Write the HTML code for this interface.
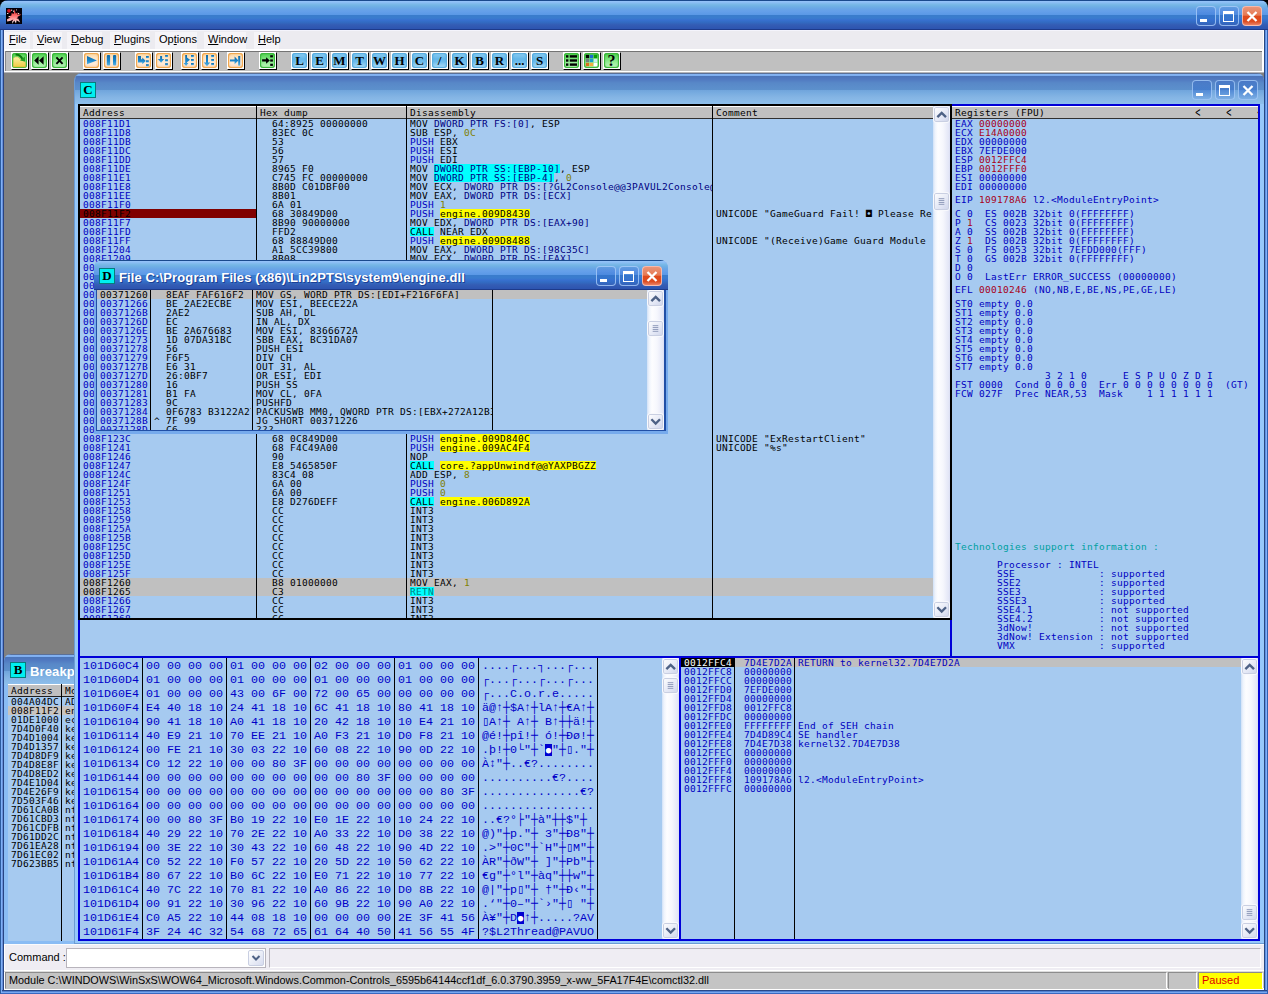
<!DOCTYPE html>
<html lang="en"><head><meta charset="utf-8"><title>OllyDbg</title>
<style>
html,body{margin:0;padding:0}
body{width:1268px;height:994px;position:relative;overflow:hidden;background:#808080;
 font-family:"Liberation Sans",sans-serif;font-size:11px;color:#000}
div,i,b,span.a{position:absolute;box-sizing:border-box}
i{display:block;font-style:normal}
.t{font:9.5px/9px "DejaVu Sans Mono","Liberation Mono",monospace;white-space:pre;height:13px;padding-top:0;letter-spacing:0.281px;color:#000}
.h{height:9px}
.d{font:11.67px/14px "Liberation Mono","DejaVu Sans Mono",monospace;white-space:pre;color:#0000c8;height:14px}
.clip{overflow:hidden}
.pane{background:#a6caf0;overflow:hidden}
.hdr{background:#c0c0c0;border-top:1px solid #fff}
.vl{width:1px;background:#000}
/* XP-ish caption buttons */
.cb{width:20px;height:20px;border:1px solid rgba(170,205,250,.8);border-radius:4px;background:linear-gradient(180deg,rgba(60,110,210,.25) 0,rgba(40,100,205,.30) 50%,rgba(70,130,215,.15) 100%)}
.cb.x{background:linear-gradient(180deg,#ea9478 0,#e67a54 46%,#e04a1c 50%,#dc4c22 80%,#ea8064 100%);border-color:rgba(250,200,190,.8)}
.cb.in{border-color:rgba(170,205,250,.75);background:linear-gradient(180deg,rgba(50,100,200,.30) 0,rgba(40,100,205,.42) 50%,rgba(70,130,215,.18) 100%)}
/* scrollbars */
.sb{width:17px;background:linear-gradient(90deg,#cfe0f7 0,#eef3fc 2px,#fdfdff 5px,#f6f7fd 10px,#e2e5f6 16px,#d9ddf3 17px)}
.sbb{left:0;width:17px;height:17px;border:1px solid #f8f9fd;border-radius:3px;
 background:linear-gradient(135deg,#ffffff 0%,#e3e7f5 60%,#cdd3ea 100%);box-shadow:inset 0 0 0 1px #c9cfe2}
.sbb svg{position:absolute;left:0;top:0}
/* toolbar buttons */
.tb{width:18px;height:18px;top:52px;background:#fcfcfc;border-left:1px solid #fff;border-top:1px solid #fff;border-right:1px solid #000;border-bottom:1px solid #000}
.tb>i{left:0;top:0;width:15px;height:15px;border-radius:3px}
.g>i{background:linear-gradient(180deg,#4fce4f 0%,#70e070 30%,#9aee9a 65%,#c4f8c4 100%);box-shadow:inset 0 0 0 1px #3cb83c,inset 0 0 2px 1px rgba(40,170,40,.55)}
.o>i{background:linear-gradient(180deg,#fbd9a4 0%,#fde6c8 35%,#fdebd8 70%,#fcdcc0 100%);box-shadow:inset 0 0 0 1px #f0a850,inset 0 0 2px 1px rgba(244,170,80,.7)}
.l>i{background:linear-gradient(180deg,#8fd0f4 0%,#62b6e8 40%,#6ebcec 60%,#b4e2fa 100%);box-shadow:inset 0 0 0 1px #58aee0,inset 0 0 2px 1px rgba(60,150,210,.45)}
.tb svg{position:absolute;left:0;top:0}
.tb span{position:absolute;left:0;top:0;width:15px;height:15px;text-align:center;font:bold 13px/15px "Liberation Serif",serif;color:#000}
.ttl{font:bold 13px/16px "Liberation Sans",sans-serif;color:#fff;white-space:pre;text-shadow:1px 1px 0 #1c3f94}
.ic{width:16px;height:16px;background:#00f0f0;border:1px solid #087c7c;text-align:center;font:bold 13px/14px "Liberation Serif",serif;color:#000}
.mn{font:11px/14px "Liberation Sans",sans-serif;white-space:pre;top:32px}
.mn u{text-decoration:underline}
</style></head>
<body>
<div style="left:0px;top:0px;width:1268px;height:12px;background:#000"></div>
<div style="left:0px;top:0px;width:1268px;height:30px;background:linear-gradient(180deg,#1a4a8c 0,#1a4a8c 1px,#96c4fa 1px,#88bcf2 3px,#7cbae8 4px,#70b2e4 6px,#68a4e6 9px,#66a0ea 11px,#5a98e6 15px,#3a7ccc 15px,#3a7cce 18px,#3870d0 20px,#326cc4 22px,#345cb4 25px,#2c54b0 29px,#1e3a8a 29px,#1e3a8a 30px);border-radius:8px 8px 0 0"></div>
<div style="left:6px;top:8px;width:16px;height:16px;background:#020008;overflow:hidden"><svg width="16" height="16" viewBox="0 0 16 16" style="position:absolute;left:0;top:0"><defs><linearGradient id="sp" x1="0" y1="0" x2="0" y2="1"><stop offset="0" stop-color="#d81818"/><stop offset="0.45" stop-color="#ff6e6e"/><stop offset="0.75" stop-color="#ffb8b8"/><stop offset="1" stop-color="#ffffff"/></linearGradient></defs><path d="M8.6 1 L9.6 5.6 L12 4.6 L11 6.6 L15.4 6.4 L11.4 9 L14.2 14.6 L10.6 12.2 L10 15.6 L8.2 12.6 L6.4 15.8 L6.2 12.4 L1.2 13.4 L1 11.2 L4.4 9.6 L2.6 8.6 L5.4 7.4 L5.6 5 L7.6 6 Z" fill="url(#sp)"/><circle cx="3" cy="2.8" r="1.9" fill="#d81420"/><rect x="5" y="1.6" width="1.2" height="1.2" fill="#e8c8c8"/><rect x="7" y="2.6" width="1.2" height="1.2" fill="#f0d8d8"/><rect x="10" y="1.4" width="1" height="1" fill="#e0b0b0"/><rect x="12" y="5" width="1.2" height="1.2" fill="#f0d0d0"/><rect x="1" y="5" width="1.4" height="1" fill="#f0d8d8"/><rect x="2.6" y="8" width="1.4" height="1.2" fill="#f4d0d0"/><path d="M4.6 12.6 L7.4 11.4 L6.6 13 Z" fill="#3a0010"/><path d="M10.4 10 L12.4 9.8 L11.6 11 Z" fill="#50101c"/></svg></div>
<div class="cb" style="left:1196px;top:6px"><svg width="18" height="18" viewBox="0 0 18 18" style="position:absolute;left:0;top:0"><rect x="3" y="12" width="7" height="3" fill="#fff"/></svg></div>
<div class="cb" style="left:1219px;top:6px"><svg width="18" height="18" viewBox="0 0 18 18" style="position:absolute;left:0;top:0"><rect x="3.5" y="4.5" width="10" height="10" fill="none" stroke="#fff" stroke-width="1"/><rect x="3" y="4" width="11" height="3" fill="#fff"/></svg></div>
<div class="cb x" style="left:1242px;top:6px"><svg width="18" height="18" viewBox="0 0 18 18" style="position:absolute;left:0;top:0"><path d="M4.5 5 L13.5 14 M13.5 5 L4.5 14" stroke="#fff" stroke-width="2.3" stroke-linecap="butt"/></svg></div>
<div style="left:0px;top:30px;width:4px;height:964px;background:linear-gradient(90deg,#2c5ca0 0,#2c5ca0 1px,#80b0f8 1px,#80b0f8 2px,#6890d8 2px,#6890d8 3px,#284484 3px)"></div>
<div style="left:1264px;top:30px;width:4px;height:964px;background:linear-gradient(90deg,#284880 0,#284880 1px,#6090e0 1px,#6090e0 2px,#80b0f8 2px,#80b0f8 3px,#3060b0 3px)"></div>
<div style="left:0px;top:990px;width:1268px;height:4px;background:linear-gradient(180deg,#284888 0,#284888 1px,#5080d0 1px,#5080d0 2px,#78a8f0 2px,#78a8f0 3px,#3868c0 3px)"></div>
<div style="left:0px;top:990px;width:1px;height:4px;background:#2c5ca0"></div>
<div style="left:1px;top:990px;width:1px;height:3px;background:#80b0f8"></div>
<div style="left:1267px;top:990px;width:1px;height:4px;background:#3060b0"></div>
<div style="left:4px;top:30px;width:1260px;height:21px;background:#ecebf0;border-left:1px solid #f6f6fa;border-right:1px solid #fff;border-bottom:2px solid #fff;border-top:1px solid #f4f4fc"></div>
<div style="left:5px;top:32px;width:25px;height:17px;background:#f5f4f8"></div>
<div class="mn" style="left:9px"><u>F</u>ile</div>
<div style="left:33px;top:32px;width:29px;height:17px;background:#f5f4f8"></div>
<div class="mn" style="left:37px"><u>V</u>iew</div>
<div style="left:67px;top:32px;width:35px;height:17px;background:#f5f4f8"></div>
<div class="mn" style="left:71px"><u>D</u>ebug</div>
<div style="left:110px;top:32px;width:40px;height:17px;background:#f5f4f8"></div>
<div class="mn" style="left:114px"><u>P</u>lugins</div>
<div style="left:155px;top:32px;width:42px;height:17px;background:#f5f4f8"></div>
<div class="mn" style="left:159px">Op<u>t</u>ions</div>
<div style="left:204px;top:32px;width:42px;height:17px;background:#f5f4f8"></div>
<div class="mn" style="left:208px"><u>W</u>indow</div>
<div style="left:254px;top:32px;width:25px;height:17px;background:#f5f4f8"></div>
<div class="mn" style="left:258px"><u>H</u>elp</div>
<div style="left:4px;top:51px;width:1260px;height:21px;background:#c0c0c0;border-left:1px solid #f0f0f4;border-bottom:1px solid #fff;border-right:2px solid #fff"></div>
<div style="left:5px;top:51px;width:1257px;height:1px;background:#747474"></div>
<div style="left:5px;top:51px;width:1px;height:20px;background:#8a8a8a"></div>
<div style="left:4px;top:72px;width:1260px;height:1px;background:#b4b4b8"></div>
<svg width="0" height="0" style="position:absolute"><defs><linearGradient id="ib" x1="0" y1="0" x2="0" y2="1" gradientUnits="objectBoundingBox"><stop offset="0" stop-color="#0f6aa6"/><stop offset="0.55" stop-color="#1a86cc"/><stop offset="1" stop-color="#58b4e4"/></linearGradient><linearGradient id="fy" x1="0" y1="0" x2="0" y2="1"><stop offset="0" stop-color="#faf2a8"/><stop offset="1" stop-color="#f0cc40"/></linearGradient></defs></svg>
<div class="tb g" style="left:11px"><i></i><svg width="15" height="15" viewBox="0 0 15 15"><path d="M1.3 5.2 L3 4 L6 4 L8 6 L13.4 9.2 L13.4 14 L1.3 14 Z" fill="url(#fy)" stroke="#c8b030" stroke-width="0.5"/><path d="M3.6 1.6 C6.5 1.6 9.2 3.6 10.8 6.4" fill="none" stroke="#0c780c" stroke-width="2"/><path d="M8 7.6 L13.2 8.6 L12.8 3.4 Z" fill="#22a022"/></svg></div>
<div class="tb g" style="left:31px"><i></i><svg width="15" height="15" viewBox="0 0 15 15"><path d="M6.6 3.2 L6.6 11.8 L2.2 7.5 Z M11.6 3.2 L11.6 11.8 L7 7.5 Z" fill="#000"/></svg></div>
<div class="tb g" style="left:51px"><i></i><svg width="15" height="15" viewBox="0 0 15 15"><path d="M4.4 4.4 L10.6 10.8 M10.6 4.4 L4.4 10.8" stroke="#000" stroke-width="1.9"/></svg></div>
<div class="tb o" style="left:83px"><i></i><svg width="15" height="15" viewBox="0 0 15 15"><path d="M3 3 L12.9 7.4 L3 11.3 Z" fill="url(#ib)"/></svg></div>
<div class="tb o" style="left:103px"><i></i><svg width="15" height="15" viewBox="0 0 15 15"><rect x="2.8" y="2" width="3.3" height="10.6" rx="1" fill="url(#ib)"/><rect x="9" y="2" width="3.2" height="10.6" rx="1" fill="url(#ib)"/></svg></div>
<div class="tb o" style="left:135px"><i></i><svg width="15" height="15" viewBox="0 0 15 15"><path d="M2 3 L5 3 L5 6.2 L6.3 6.2 L6.3 4.6 L9.8 8 L6.3 11.2 L6.3 9.4 L2 9.4 Z" fill="url(#ib)"/><rect x="10" y="3" width="2.8" height="2.1" fill="url(#ib)"/><rect x="10" y="7.3" width="2.8" height="2.1" fill="url(#ib)"/><rect x="10" y="11.2" width="2.8" height="2.1" fill="url(#ib)"/></svg></div>
<div class="tb o" style="left:155px"><i></i><svg width="15" height="15" viewBox="0 0 15 15"><path d="M4.1 3 L6.1 3 L6.1 5.9 L8.2 5.9 L5.1 9.7 L1.9 5.9 L4.1 5.9 Z" fill="url(#ib)"/><rect x="9.1" y="2" width="2.8" height="2.1" fill="url(#ib)"/><rect x="9.1" y="6.3" width="2.8" height="2.1" fill="url(#ib)"/><rect x="9.1" y="10.2" width="2.8" height="2.1" fill="url(#ib)"/></svg></div>
<div class="tb o" style="left:181px"><i></i><svg width="15" height="15" viewBox="0 0 15 15"><path d="M3.2 2 L5 2 L5 4.4 L8 6.8 L5 9.2 L5 10 L6.4 10 L4.1 13 L1.6 10 L3.2 10 Z" fill="url(#ib)"/><rect x="9" y="2" width="2.8" height="2.1" fill="url(#ib)"/><rect x="9" y="6" width="2.8" height="2.1" fill="url(#ib)"/><rect x="9" y="10" width="2.8" height="2.1" fill="url(#ib)"/></svg></div>
<div class="tb o" style="left:201px"><i></i><svg width="15" height="15" viewBox="0 0 15 15"><path d="M4 2 L6 2 L6 9.5 L8.2 9.5 L5 13.2 L1.8 9.5 L4 9.5 Z" fill="url(#ib)"/><rect x="9.2" y="2" width="2.8" height="2.1" fill="url(#ib)"/><rect x="9.2" y="6" width="2.8" height="2.1" fill="url(#ib)"/><rect x="9.2" y="10" width="2.8" height="2.1" fill="url(#ib)"/></svg></div>
<div class="tb o" style="left:227px"><i></i><svg width="15" height="15" viewBox="0 0 15 15"><path d="M2 6.4 L6.6 6.4 L6.6 3.6 L10.4 7.4 L6.6 11.2 L6.6 8.5 L2 8.5 Z" fill="url(#ib)"/><rect x="10.2" y="3" width="2" height="9.6" fill="url(#ib)"/></svg></div>
<div class="tb g" style="left:259px"><i></i><svg width="15" height="15" viewBox="0 0 15 15"><path d="M2.1 6.3 L6.1 6.3 L6.1 4.3 L9.8 7.5 L6.1 10.7 L6.1 8.6 L2.1 8.6 Z" fill="#000"/><rect x="10.2" y="2.2" width="2.7" height="2.2" fill="#000"/><rect x="10.2" y="6.4" width="2.7" height="2.2" fill="#000"/><rect x="10.2" y="10.7" width="2.7" height="2.2" fill="#000"/></svg></div>
<div class="tb l" style="left:291px"><i></i><span>L</span></div>
<div class="tb l" style="left:311px"><i></i><span>E</span></div>
<div class="tb l" style="left:331px"><i></i><span>M</span></div>
<div class="tb l" style="left:351px"><i></i><span>T</span></div>
<div class="tb l" style="left:371px"><i></i><span>W</span></div>
<div class="tb l" style="left:391px"><i></i><span>H</span></div>
<div class="tb l" style="left:411px"><i></i><span>C</span></div>
<div class="tb l" style="left:431px"><i></i><span>/</span></div>
<div class="tb l" style="left:451px"><i></i><span>K</span></div>
<div class="tb l" style="left:471px"><i></i><span>B</span></div>
<div class="tb l" style="left:491px"><i></i><span>R</span></div>
<div class="tb l" style="left:511px"><i></i><span>...</span></div>
<div class="tb l" style="left:531px"><i></i><span>S</span></div>
<div class="tb g" style="left:563px"><i></i><svg width="15" height="15" viewBox="0 0 15 15"><rect x="2" y="2.2" width="2.4" height="2.4" fill="#000"/><rect x="5.8" y="2.2" width="7.2" height="2.4" fill="#000"/><rect x="2" y="6.3" width="2.4" height="2.4" fill="#000"/><rect x="5.8" y="6.3" width="7.2" height="2.4" fill="#000"/><rect x="2" y="10.4" width="2.4" height="2.4" fill="#000"/><rect x="5.8" y="10.4" width="7.2" height="2.4" fill="#000"/></svg></div>
<div class="tb g" style="left:583px"><i></i><svg width="15" height="15" viewBox="0 0 15 15"><rect x="1.8" y="1.8" width="3.4" height="3.4" fill="#000"/><rect x="5.8" y="1.8" width="3.4" height="3.4" fill="#1a6ad0"/><rect x="9.8" y="1.8" width="3.4" height="3.4" fill="#0a9a0a"/><rect x="1.8" y="5.8" width="3.4" height="3.4" fill="#70807a"/><rect x="5.8" y="5.8" width="3.4" height="3.4" fill="#18a0c8"/><rect x="9.8" y="5.8" width="3.4" height="3.4" fill="#c8f0f0"/><rect x="1.8" y="9.8" width="3.4" height="3.4" fill="#d87018"/><rect x="5.8" y="9.8" width="3.4" height="3.4" fill="#f0b040"/><rect x="9.8" y="9.8" width="3.4" height="3.4" fill="#ffffff"/></svg></div>
<div class="tb g" style="left:603px"><i></i><span style="font-size:16px">?</span></div>
<div style="left:74px;top:73px;width:1190px;height:871px;background:#6c9cd4;border-radius:8px 8px 0 0"></div>
<div style="left:75px;top:74px;width:1189px;height:869px;background:#96c8fa;border-radius:7px 7px 0 0"></div>
<div style="left:75px;top:73px;width:1189px;height:31px;background:linear-gradient(180deg,#5a7098 0,#5a7098 1px,#86b4f2 1px,#7eaef0 2.5px,#4a74b8 3px,#5078c0 6px,#5888c8 10px,#5c90cc 16.5px,#70a4dc 17px,#78ace0 20px,#84b4e4 24px,#8ec0ec 31px);border-radius:7px 7px 0 0"></div>
<div class="ic" style="left:80px;top:82px">C</div>
<div class="cb in" style="left:1192px;top:80px"><svg width="18" height="18" viewBox="0 0 18 18" style="position:absolute;left:0;top:0"><rect x="3" y="12" width="7" height="3" fill="#fff"/></svg></div>
<div class="cb in" style="left:1215px;top:80px"><svg width="18" height="18" viewBox="0 0 18 18" style="position:absolute;left:0;top:0"><rect x="3.5" y="4.5" width="10" height="10" fill="none" stroke="#fff" stroke-width="1"/><rect x="3" y="4" width="11" height="3" fill="#fff"/></svg></div>
<div class="cb in" style="left:1238px;top:80px"><svg width="18" height="18" viewBox="0 0 18 18" style="position:absolute;left:0;top:0"><path d="M4.5 5 L13.5 14 M13.5 5 L4.5 14" stroke="#fff" stroke-width="2.3" stroke-linecap="butt"/></svg></div>
<div style="left:78px;top:104px;width:1182px;height:837px;background:#a6caf0"></div>
<div style="left:78px;top:104px;width:874px;height:2px;background:#000"></div>
<div style="left:78px;top:104px;width:2px;height:516px;background:#000"></div>
<div style="left:78px;top:618px;width:874px;height:2px;background:#000"></div>
<div style="left:950px;top:104px;width:2px;height:516px;background:#000"></div>
<div style="left:952px;top:104px;width:308px;height:2px;background:#0000d8"></div>
<div style="left:1258px;top:104px;width:2px;height:837px;background:#0000d8"></div>
<div style="left:78px;top:620px;width:2px;height:321px;background:#0000d8"></div>
<div style="left:950px;top:620px;width:2px;height:38px;background:#0000d8"></div>
<div style="left:78px;top:656px;width:1182px;height:2px;background:#0000d8"></div>
<div style="left:679px;top:658px;width:2px;height:283px;background:#0000d8"></div>
<div style="left:78px;top:939px;width:1182px;height:2px;background:#0000d8"></div>
<div class="pane" style="left:80px;top:106px;width:870px;height:512px">
<div class="hdr" style="left:0px;top:0px;width:853px;height:12px;"></div>
<div style="left:0px;top:12px;width:853px;height:1px;background:#303030"></div>
<div class="t" style="left:3px;top:2px;">Address</div>
<div class="t" style="left:180px;top:2px;">Hex dump</div>
<div class="t" style="left:330px;top:2px;">Disassembly</div>
<div class="t" style="left:636px;top:2px;">Comment</div>





<i class="h" style="left:354px;top:58px;width:126px;background:#00ffff"></i>
<i class="h" style="left:354px;top:67px;width:120px;background:#00ffff"></i>



<div style="left:0px;top:103px;width:176px;height:9px;background:#800000"></div>
<i class="h" style="left:360px;top:103px;width:90px;background:#ffff00"></i>

<i class="h" style="left:330px;top:121px;width:24px;background:#00ffff"></i>
<i class="h" style="left:360px;top:130px;width:90px;background:#ffff00"></i>


<i class="h" style="left:360px;top:328px;width:90px;background:#ffff00"></i>
<i class="h" style="left:360px;top:337px;width:90px;background:#ffff00"></i>

<i class="h" style="left:330px;top:355px;width:24px;background:#00ffff"></i><i class="h" style="left:360px;top:355px;width:156px;background:#ffff00"></i>



<i class="h" style="left:330px;top:391px;width:24px;background:#00ffff"></i><i class="h" style="left:360px;top:391px;width:90px;background:#ffff00"></i>








<div style="left:0px;top:472px;width:853px;height:9px;background:#c0c0c0"></div>

<div style="left:0px;top:481px;width:853px;height:9px;background:#c0c0c0"></div>
<i class="h" style="left:330px;top:481px;width:24px;background:#00ffff"></i>



<div class="t" style="left:3px;top:13px;color:#0000c0;">008F11D1</div>
<div class="t" style="left:192px;top:13px;">64:8925 00000000</div>
<div class="t" style="left:330px;top:13px;width:302px;overflow:hidden">MOV <span style="color:#000080">DWORD PTR FS:[</span><span style="color:#000080">0</span><span style="color:#000080">]</span>, ESP</div>
<div class="t" style="left:3px;top:22px;color:#0000c0;">008F11D8</div>
<div class="t" style="left:192px;top:22px;">83EC 0C</div>
<div class="t" style="left:330px;top:22px;width:302px;overflow:hidden">SUB ESP, <span style="color:#808000">0C</span></div>
<div class="t" style="left:3px;top:31px;color:#0000c0;">008F11DB</div>
<div class="t" style="left:192px;top:31px;">53</div>
<div class="t" style="left:330px;top:31px;width:302px;overflow:hidden"><span style="color:#0000c0">PUSH</span> EBX</div>
<div class="t" style="left:3px;top:40px;color:#0000c0;">008F11DC</div>
<div class="t" style="left:192px;top:40px;">56</div>
<div class="t" style="left:330px;top:40px;width:302px;overflow:hidden"><span style="color:#0000c0">PUSH</span> ESI</div>
<div class="t" style="left:3px;top:49px;color:#0000c0;">008F11DD</div>
<div class="t" style="left:192px;top:49px;">57</div>
<div class="t" style="left:330px;top:49px;width:302px;overflow:hidden"><span style="color:#0000c0">PUSH</span> EDI</div>
<div class="t" style="left:3px;top:58px;color:#0000c0;">008F11DE</div>
<div class="t" style="left:192px;top:58px;">8965 F0</div>
<div class="t" style="left:330px;top:58px;width:302px;overflow:hidden">MOV <span style="color:#000080">DWORD PTR SS:[EBP-10]</span>, ESP</div>
<div class="t" style="left:3px;top:67px;color:#0000c0;">008F11E1</div>
<div class="t" style="left:192px;top:67px;">C745 FC 00000000</div>
<div class="t" style="left:330px;top:67px;width:302px;overflow:hidden">MOV <span style="color:#000080">DWORD PTR SS:[EBP-4]</span>, <span style="color:#808000">0</span></div>
<div class="t" style="left:3px;top:76px;color:#0000c0;">008F11E8</div>
<div class="t" style="left:192px;top:76px;">8B0D C01DBF00</div>
<div class="t" style="left:330px;top:76px;width:302px;overflow:hidden">MOV ECX, <span style="color:#000080">DWORD PTR DS:[?GL2Console@@3PAVUL2Console@@A]</span></div>
<div class="t" style="left:3px;top:85px;color:#0000c0;">008F11EE</div>
<div class="t" style="left:192px;top:85px;">8B01</div>
<div class="t" style="left:330px;top:85px;width:302px;overflow:hidden">MOV EAX, <span style="color:#000080">DWORD PTR DS:[ECX]</span></div>
<div class="t" style="left:3px;top:94px;color:#0000c0;">008F11F0</div>
<div class="t" style="left:192px;top:94px;">6A 01</div>
<div class="t" style="left:330px;top:94px;width:302px;overflow:hidden"><span style="color:#0000c0">PUSH</span> <span style="color:#808000">1</span></div>
<div class="t" style="left:3px;top:103px;color:#000;">008F11F2</div>
<div class="t" style="left:192px;top:103px;">68 30849D00</div>
<div class="t" style="left:330px;top:103px;width:302px;overflow:hidden"><span style="color:#0000c0">PUSH</span> engine.009D8430</div>
<div class="t" style="left:636px;top:103px;width:216px;overflow:hidden">UNICODE "GameGuard Fail! ◘ Please Re</div>
<div class="t" style="left:3px;top:112px;color:#0000c0;">008F11F7</div>
<div class="t" style="left:192px;top:112px;">8B90 90000000</div>
<div class="t" style="left:330px;top:112px;width:302px;overflow:hidden">MOV EDX, <span style="color:#000080">DWORD PTR DS:[EAX+90]</span></div>
<div class="t" style="left:3px;top:121px;color:#0000c0;">008F11FD</div>
<div class="t" style="left:192px;top:121px;">FFD2</div>
<div class="t" style="left:330px;top:121px;width:302px;overflow:hidden">CALL NEAR EDX</div>
<div class="t" style="left:3px;top:130px;color:#0000c0;">008F11FF</div>
<div class="t" style="left:192px;top:130px;">68 88849D00</div>
<div class="t" style="left:330px;top:130px;width:302px;overflow:hidden"><span style="color:#0000c0">PUSH</span> engine.009D8488</div>
<div class="t" style="left:636px;top:130px;width:216px;overflow:hidden">UNICODE "(Receive)Game Guard Module</div>
<div class="t" style="left:3px;top:139px;color:#0000c0;">008F1204</div>
<div class="t" style="left:192px;top:139px;">A1 5CC39800</div>
<div class="t" style="left:330px;top:139px;width:302px;overflow:hidden">MOV EAX, <span style="color:#000080">DWORD PTR DS:[98C35C]</span></div>
<div class="t" style="left:3px;top:148px;color:#0000c0;">008F1209</div>
<div class="t" style="left:192px;top:148px;">8B08</div>
<div class="t" style="left:330px;top:148px;width:302px;overflow:hidden">MOV ECX, <span style="color:#000080">DWORD PTR DS:[EAX]</span></div>
<div class="t" style="left:3px;top:157px;color:#0000c0;">008F120B</div>
<div class="t" style="left:3px;top:166px;color:#0000c0;">008F120D</div>
<div class="t" style="left:3px;top:175px;color:#0000c0;">008F120F</div>
<div class="t" style="left:3px;top:184px;color:#0000c0;">008F1215</div>
<div class="t" style="left:3px;top:193px;color:#0000c0;">008F1217</div>
<div class="t" style="left:3px;top:202px;color:#0000c0;">008F1219</div>
<div class="t" style="left:3px;top:211px;color:#0000c0;">008F121B</div>
<div class="t" style="left:3px;top:220px;color:#0000c0;">008F121D</div>
<div class="t" style="left:3px;top:229px;color:#0000c0;">008F121F</div>
<div class="t" style="left:3px;top:238px;color:#0000c0;">008F1221</div>
<div class="t" style="left:3px;top:247px;color:#0000c0;">008F1226</div>
<div class="t" style="left:3px;top:256px;color:#0000c0;">008F1228</div>
<div class="t" style="left:3px;top:265px;color:#0000c0;">008F122A</div>
<div class="t" style="left:3px;top:274px;color:#0000c0;">008F122F</div>
<div class="t" style="left:3px;top:283px;color:#0000c0;">008F1231</div>
<div class="t" style="left:3px;top:292px;color:#0000c0;">008F1233</div>
<div class="t" style="left:3px;top:301px;color:#0000c0;">008F1235</div>
<div class="t" style="left:3px;top:310px;color:#0000c0;">008F1237</div>
<div class="t" style="left:3px;top:319px;color:#0000c0;">008F123A</div>
<div class="t" style="left:3px;top:328px;color:#0000c0;">008F123C</div>
<div class="t" style="left:192px;top:328px;">68 0C849D00</div>
<div class="t" style="left:330px;top:328px;width:302px;overflow:hidden"><span style="color:#0000c0">PUSH</span> engine.009D840C</div>
<div class="t" style="left:636px;top:328px;width:216px;overflow:hidden">UNICODE "ExRestartClient"</div>
<div class="t" style="left:3px;top:337px;color:#0000c0;">008F1241</div>
<div class="t" style="left:192px;top:337px;">68 F4C49A00</div>
<div class="t" style="left:330px;top:337px;width:302px;overflow:hidden"><span style="color:#0000c0">PUSH</span> engine.009AC4F4</div>
<div class="t" style="left:636px;top:337px;width:216px;overflow:hidden">UNICODE "%s"</div>
<div class="t" style="left:3px;top:346px;color:#0000c0;">008F1246</div>
<div class="t" style="left:192px;top:346px;">90</div>
<div class="t" style="left:330px;top:346px;width:302px;overflow:hidden">NOP</div>
<div class="t" style="left:3px;top:355px;color:#0000c0;">008F1247</div>
<div class="t" style="left:192px;top:355px;">E8 5465850F</div>
<div class="t" style="left:330px;top:355px;width:302px;overflow:hidden">CALL core.?appUnwindf@@YAXPBGZZ</div>
<div class="t" style="left:3px;top:364px;color:#0000c0;">008F124C</div>
<div class="t" style="left:192px;top:364px;">83C4 08</div>
<div class="t" style="left:330px;top:364px;width:302px;overflow:hidden">ADD ESP, <span style="color:#808000">8</span></div>
<div class="t" style="left:3px;top:373px;color:#0000c0;">008F124F</div>
<div class="t" style="left:192px;top:373px;">6A 00</div>
<div class="t" style="left:330px;top:373px;width:302px;overflow:hidden"><span style="color:#0000c0">PUSH</span> <span style="color:#808000">0</span></div>
<div class="t" style="left:3px;top:382px;color:#0000c0;">008F1251</div>
<div class="t" style="left:192px;top:382px;">6A 00</div>
<div class="t" style="left:330px;top:382px;width:302px;overflow:hidden"><span style="color:#0000c0">PUSH</span> <span style="color:#808000">0</span></div>
<div class="t" style="left:3px;top:391px;color:#0000c0;">008F1253</div>
<div class="t" style="left:192px;top:391px;">E8 D276DEFF</div>
<div class="t" style="left:330px;top:391px;width:302px;overflow:hidden">CALL engine.006D892A</div>
<div class="t" style="left:3px;top:400px;color:#0000c0;">008F1258</div>
<div class="t" style="left:192px;top:400px;">CC</div>
<div class="t" style="left:330px;top:400px;width:302px;overflow:hidden">INT3</div>
<div class="t" style="left:3px;top:409px;color:#0000c0;">008F1259</div>
<div class="t" style="left:192px;top:409px;">CC</div>
<div class="t" style="left:330px;top:409px;width:302px;overflow:hidden">INT3</div>
<div class="t" style="left:3px;top:418px;color:#0000c0;">008F125A</div>
<div class="t" style="left:192px;top:418px;">CC</div>
<div class="t" style="left:330px;top:418px;width:302px;overflow:hidden">INT3</div>
<div class="t" style="left:3px;top:427px;color:#0000c0;">008F125B</div>
<div class="t" style="left:192px;top:427px;">CC</div>
<div class="t" style="left:330px;top:427px;width:302px;overflow:hidden">INT3</div>
<div class="t" style="left:3px;top:436px;color:#0000c0;">008F125C</div>
<div class="t" style="left:192px;top:436px;">CC</div>
<div class="t" style="left:330px;top:436px;width:302px;overflow:hidden">INT3</div>
<div class="t" style="left:3px;top:445px;color:#0000c0;">008F125D</div>
<div class="t" style="left:192px;top:445px;">CC</div>
<div class="t" style="left:330px;top:445px;width:302px;overflow:hidden">INT3</div>
<div class="t" style="left:3px;top:454px;color:#0000c0;">008F125E</div>
<div class="t" style="left:192px;top:454px;">CC</div>
<div class="t" style="left:330px;top:454px;width:302px;overflow:hidden">INT3</div>
<div class="t" style="left:3px;top:463px;color:#0000c0;">008F125F</div>
<div class="t" style="left:192px;top:463px;">CC</div>
<div class="t" style="left:330px;top:463px;width:302px;overflow:hidden">INT3</div>
<div class="t" style="left:3px;top:472px;color:#000;">008F1260</div>
<div class="t" style="left:192px;top:472px;">B8 01000000</div>
<div class="t" style="left:330px;top:472px;width:302px;overflow:hidden">MOV EAX, <span style="color:#808000">1</span></div>
<div class="t" style="left:3px;top:481px;color:#000;">008F1265</div>
<div class="t" style="left:192px;top:481px;">C3</div>
<div class="t" style="left:330px;top:481px;width:302px;overflow:hidden"><span style="color:#008080">RETN</span></div>
<div class="t" style="left:3px;top:490px;color:#0000c0;">008F1266</div>
<div class="t" style="left:192px;top:490px;">CC</div>
<div class="t" style="left:330px;top:490px;width:302px;overflow:hidden">INT3</div>
<div class="t" style="left:3px;top:499px;color:#0000c0;">008F1267</div>
<div class="t" style="left:192px;top:499px;">CC</div>
<div class="t" style="left:330px;top:499px;width:302px;overflow:hidden">INT3</div>
<div class="t" style="left:3px;top:508px;color:#0000c0;">008F1268</div>
<div class="t" style="left:192px;top:508px;">CC</div>
<div class="t" style="left:330px;top:508px;width:302px;overflow:hidden">INT3</div>
<div class="vl" style="left:176px;top:0px;width:1px;height:512px;"></div>
<div class="vl" style="left:326px;top:0px;width:1px;height:512px;"></div>
<div class="vl" style="left:632px;top:0px;width:1px;height:512px;"></div>
</div>
<div class="sb" style="left:933px;top:106px;height:512px"><div class="sbb" style="top:0"><svg width="15" height="15" viewBox="0 0 16 16"><path d="M3.6 10.8 L8.2 6.2 L12.8 10.8" fill="none" stroke="#4d6185" stroke-width="2.5"/></svg></div><div class="sbb" style="top:86px;height:19px"><svg style="top:1px" width="15" height="15" viewBox="0 0 16 16"><rect x="5" y="4.5" width="6" height="1" fill="#8d98b8"/><rect x="5" y="6.5" width="6" height="1" fill="#8d98b8"/><rect x="5" y="8.5" width="6" height="1" fill="#8d98b8"/><rect x="5" y="10.5" width="6" height="1" fill="#8d98b8"/></svg></div><div class="sbb" style="top:495px"><svg width="15" height="15" viewBox="0 0 16 16"><path d="M3.6 5.6 L8.2 10.2 L12.8 5.6" fill="none" stroke="#4d6185" stroke-width="2.5"/></svg></div></div>
<div class="pane" style="left:952px;top:106px;width:306px;height:550px">
<div class="hdr" style="left:0px;top:0px;width:306px;height:12px;"></div>
<div style="left:0px;top:12px;width:306px;height:1px;background:#303030"></div>
<div class="t" style="left:3px;top:2px;">Registers (FPU)</div>
<div class="t" style="left:243px;top:2px;"><span style="display:inline-block;transform:scale(0.9,1.5);transform-origin:50% 62%">&lt;</span></div>
<div class="t" style="left:274px;top:2px;"><span style="display:inline-block;transform:scale(0.9,1.5);transform-origin:50% 62%">&lt;</span></div>
<div class="t" style="left:305px;top:2px;"><span style="display:inline-block;transform:scale(0.9,1.5);transform-origin:50% 62%">&lt;</span></div>
<div class="t" style="left:3px;top:13px;color:#0000c0;">EAX <span style="color:#a80018">00000000</span></div>
<div class="t" style="left:3px;top:22px;color:#0000c0;">ECX <span style="color:#a80018">E14A0000</span></div>
<div class="t" style="left:3px;top:31px;color:#0000c0;">EDX 00000000</div>
<div class="t" style="left:3px;top:40px;color:#0000c0;">EBX 7EFDE000</div>
<div class="t" style="left:3px;top:49px;color:#0000c0;">ESP <span style="color:#a80018">0012FFC4</span></div>
<div class="t" style="left:3px;top:58px;color:#0000c0;">EBP <span style="color:#a80018">0012FFF0</span></div>
<div class="t" style="left:3px;top:67px;color:#0000c0;">ESI 00000000</div>
<div class="t" style="left:3px;top:76px;color:#0000c0;">EDI 00000000</div>
<div class="t" style="left:3px;top:89px;color:#0000c0;">EIP <span style="color:#a80018">109178A6</span> l2.&lt;ModuleEntryPoint&gt;</div>
<div class="t" style="left:3px;top:103px;color:#0000c0;">C 0  ES 002B 32bit 0(FFFFFFFF)</div>
<div class="t" style="left:3px;top:112px;color:#0000c0;">P <span style="color:#a80018">1</span>  CS 0023 32bit 0(FFFFFFFF)</div>
<div class="t" style="left:3px;top:121px;color:#0000c0;">A 0  SS 002B 32bit 0(FFFFFFFF)</div>
<div class="t" style="left:3px;top:130px;color:#0000c0;">Z <span style="color:#a80018">1</span>  DS 002B 32bit 0(FFFFFFFF)</div>
<div class="t" style="left:3px;top:139px;color:#0000c0;">S 0  FS 0053 32bit 7EFDD000(FFF)</div>
<div class="t" style="left:3px;top:148px;color:#0000c0;">T 0  GS 002B 32bit 0(FFFFFFFF)</div>
<div class="t" style="left:3px;top:157px;color:#0000c0;">D 0  </div>
<div class="t" style="left:3px;top:166px;color:#0000c0;">O 0  LastErr ERROR_SUCCESS (00000000)</div>
<div class="t" style="left:3px;top:179px;color:#0000c0;">EFL <span style="color:#a80018">00010246</span> (NO,NB,E,BE,NS,PE,GE,LE)</div>
<div class="t" style="left:3px;top:193px;color:#0000c0;">ST0 empty 0.0</div>
<div class="t" style="left:3px;top:202px;color:#0000c0;">ST1 empty 0.0</div>
<div class="t" style="left:3px;top:211px;color:#0000c0;">ST2 empty 0.0</div>
<div class="t" style="left:3px;top:220px;color:#0000c0;">ST3 empty 0.0</div>
<div class="t" style="left:3px;top:229px;color:#0000c0;">ST4 empty 0.0</div>
<div class="t" style="left:3px;top:238px;color:#0000c0;">ST5 empty 0.0</div>
<div class="t" style="left:3px;top:247px;color:#0000c0;">ST6 empty 0.0</div>
<div class="t" style="left:3px;top:256px;color:#0000c0;">ST7 empty 0.0</div>
<div class="t" style="left:3px;top:265px;color:#0000c0;">               3 2 1 0      E S P U O Z D I</div>
<div class="t" style="left:3px;top:274px;color:#0000c0;">FST 0000  Cond 0 0 0 0  Err 0 0 0 0 0 0 0 0  (GT)</div>
<div class="t" style="left:3px;top:283px;color:#0000c0;">FCW 027F  Prec NEAR,53  Mask    1 1 1 1 1 1</div>
<div class="t" style="left:3px;top:436px;color:#0000c0;"><span style="color:#00a0a0">Technologies support information :</span></div>
<div class="t" style="left:3px;top:454px;color:#0000c0;">       Processor : INTEL</div>
<div class="t" style="left:3px;top:463px;color:#0000c0;">       SSE              : supported</div>
<div class="t" style="left:3px;top:472px;color:#0000c0;">       SSE2             : supported</div>
<div class="t" style="left:3px;top:481px;color:#0000c0;">       SSE3             : supported</div>
<div class="t" style="left:3px;top:490px;color:#0000c0;">       SSSE3            : supported</div>
<div class="t" style="left:3px;top:499px;color:#0000c0;">       SSE4.1           : not supported</div>
<div class="t" style="left:3px;top:508px;color:#0000c0;">       SSE4.2           : not supported</div>
<div class="t" style="left:3px;top:517px;color:#0000c0;">       3dNow!           : not supported</div>
<div class="t" style="left:3px;top:526px;color:#0000c0;">       3dNow! Extension : not supported</div>
<div class="t" style="left:3px;top:535px;color:#0000c0;">       VMX              : supported</div>
</div>
<div class="pane" style="left:80px;top:658px;width:582px;height:281px">
<div class="d" style="left:3px;top:1px">101D60C4</div>
<div class="d" style="left:66px;top:1px">00 00 00 00</div>
<div class="d" style="left:150px;top:1px">01 00 00 00</div>
<div class="d" style="left:234px;top:1px">02 00 00 00</div>
<div class="d" style="left:318px;top:1px">01 00 00 00</div>
<span class="a d" style="left:402px;top:1px;width:7px;text-align:center">.</span><span class="a d" style="left:409px;top:1px;width:7px;text-align:center">.</span><span class="a d" style="left:416px;top:1px;width:7px;text-align:center">.</span><span class="a d" style="left:423px;top:1px;width:7px;text-align:center">.</span><span class="a d" style="left:430px;top:1px;width:7px;text-align:center">┌</span><span class="a d" style="left:437px;top:1px;width:7px;text-align:center">.</span><span class="a d" style="left:444px;top:1px;width:7px;text-align:center">.</span><span class="a d" style="left:451px;top:1px;width:7px;text-align:center">.</span><span class="a d" style="left:458px;top:1px;width:7px;text-align:center">┐</span><span class="a d" style="left:465px;top:1px;width:7px;text-align:center">.</span><span class="a d" style="left:472px;top:1px;width:7px;text-align:center">.</span><span class="a d" style="left:479px;top:1px;width:7px;text-align:center">.</span><span class="a d" style="left:486px;top:1px;width:7px;text-align:center">┌</span><span class="a d" style="left:493px;top:1px;width:7px;text-align:center">.</span><span class="a d" style="left:500px;top:1px;width:7px;text-align:center">.</span><span class="a d" style="left:507px;top:1px;width:7px;text-align:center">.</span>
<div class="d" style="left:3px;top:15px">101D60D4</div>
<div class="d" style="left:66px;top:15px">01 00 00 00</div>
<div class="d" style="left:150px;top:15px">01 00 00 00</div>
<div class="d" style="left:234px;top:15px">01 00 00 00</div>
<div class="d" style="left:318px;top:15px">01 00 00 00</div>
<span class="a d" style="left:402px;top:15px;width:7px;text-align:center">┌</span><span class="a d" style="left:409px;top:15px;width:7px;text-align:center">.</span><span class="a d" style="left:416px;top:15px;width:7px;text-align:center">.</span><span class="a d" style="left:423px;top:15px;width:7px;text-align:center">.</span><span class="a d" style="left:430px;top:15px;width:7px;text-align:center">┌</span><span class="a d" style="left:437px;top:15px;width:7px;text-align:center">.</span><span class="a d" style="left:444px;top:15px;width:7px;text-align:center">.</span><span class="a d" style="left:451px;top:15px;width:7px;text-align:center">.</span><span class="a d" style="left:458px;top:15px;width:7px;text-align:center">┌</span><span class="a d" style="left:465px;top:15px;width:7px;text-align:center">.</span><span class="a d" style="left:472px;top:15px;width:7px;text-align:center">.</span><span class="a d" style="left:479px;top:15px;width:7px;text-align:center">.</span><span class="a d" style="left:486px;top:15px;width:7px;text-align:center">┌</span><span class="a d" style="left:493px;top:15px;width:7px;text-align:center">.</span><span class="a d" style="left:500px;top:15px;width:7px;text-align:center">.</span><span class="a d" style="left:507px;top:15px;width:7px;text-align:center">.</span>
<div class="d" style="left:3px;top:29px">101D60E4</div>
<div class="d" style="left:66px;top:29px">01 00 00 00</div>
<div class="d" style="left:150px;top:29px">43 00 6F 00</div>
<div class="d" style="left:234px;top:29px">72 00 65 00</div>
<div class="d" style="left:318px;top:29px">00 00 00 00</div>
<span class="a d" style="left:402px;top:29px;width:7px;text-align:center">┌</span><span class="a d" style="left:409px;top:29px;width:7px;text-align:center">.</span><span class="a d" style="left:416px;top:29px;width:7px;text-align:center">.</span><span class="a d" style="left:423px;top:29px;width:7px;text-align:center">.</span><span class="a d" style="left:430px;top:29px;width:7px;text-align:center">C</span><span class="a d" style="left:437px;top:29px;width:7px;text-align:center">.</span><span class="a d" style="left:444px;top:29px;width:7px;text-align:center">o</span><span class="a d" style="left:451px;top:29px;width:7px;text-align:center">.</span><span class="a d" style="left:458px;top:29px;width:7px;text-align:center">r</span><span class="a d" style="left:465px;top:29px;width:7px;text-align:center">.</span><span class="a d" style="left:472px;top:29px;width:7px;text-align:center">e</span><span class="a d" style="left:479px;top:29px;width:7px;text-align:center">.</span><span class="a d" style="left:486px;top:29px;width:7px;text-align:center">.</span><span class="a d" style="left:493px;top:29px;width:7px;text-align:center">.</span><span class="a d" style="left:500px;top:29px;width:7px;text-align:center">.</span><span class="a d" style="left:507px;top:29px;width:7px;text-align:center">.</span>
<div class="d" style="left:3px;top:43px">101D60F4</div>
<div class="d" style="left:66px;top:43px">E4 40 18 10</div>
<div class="d" style="left:150px;top:43px">24 41 18 10</div>
<div class="d" style="left:234px;top:43px">6C 41 18 10</div>
<div class="d" style="left:318px;top:43px">80 41 18 10</div>
<span class="a d" style="left:402px;top:43px;width:7px;text-align:center">ä</span><span class="a d" style="left:409px;top:43px;width:7px;text-align:center">@</span><span class="a d" style="left:416px;top:43px;width:7px;text-align:center">↑</span><span class="a d" style="left:423px;top:43px;width:7px;text-align:center">┼</span><span class="a d" style="left:430px;top:43px;width:7px;text-align:center">$</span><span class="a d" style="left:437px;top:43px;width:7px;text-align:center">A</span><span class="a d" style="left:444px;top:43px;width:7px;text-align:center">↑</span><span class="a d" style="left:451px;top:43px;width:7px;text-align:center">┼</span><span class="a d" style="left:458px;top:43px;width:7px;text-align:center">l</span><span class="a d" style="left:465px;top:43px;width:7px;text-align:center">A</span><span class="a d" style="left:472px;top:43px;width:7px;text-align:center">↑</span><span class="a d" style="left:479px;top:43px;width:7px;text-align:center">┼</span><span class="a d" style="left:486px;top:43px;width:7px;text-align:center">€</span><span class="a d" style="left:493px;top:43px;width:7px;text-align:center">A</span><span class="a d" style="left:500px;top:43px;width:7px;text-align:center">↑</span><span class="a d" style="left:507px;top:43px;width:7px;text-align:center">┼</span>
<div class="d" style="left:3px;top:57px">101D6104</div>
<div class="d" style="left:66px;top:57px">90 41 18 10</div>
<div class="d" style="left:150px;top:57px">A0 41 18 10</div>
<div class="d" style="left:234px;top:57px">20 42 18 10</div>
<div class="d" style="left:318px;top:57px">10 E4 21 10</div>
<span class="a d" style="left:402px;top:57px;width:7px;text-align:center">▯</span><span class="a d" style="left:409px;top:57px;width:7px;text-align:center">A</span><span class="a d" style="left:416px;top:57px;width:7px;text-align:center">↑</span><span class="a d" style="left:423px;top:57px;width:7px;text-align:center">┼</span><span class="a d" style="left:437px;top:57px;width:7px;text-align:center">A</span><span class="a d" style="left:444px;top:57px;width:7px;text-align:center">↑</span><span class="a d" style="left:451px;top:57px;width:7px;text-align:center">┼</span><span class="a d" style="left:465px;top:57px;width:7px;text-align:center">B</span><span class="a d" style="left:472px;top:57px;width:7px;text-align:center">↑</span><span class="a d" style="left:479px;top:57px;width:7px;text-align:center">┼</span><span class="a d" style="left:486px;top:57px;width:7px;text-align:center">┼</span><span class="a d" style="left:493px;top:57px;width:7px;text-align:center">ä</span><span class="a d" style="left:500px;top:57px;width:7px;text-align:center">!</span><span class="a d" style="left:507px;top:57px;width:7px;text-align:center">┼</span>
<div class="d" style="left:3px;top:71px">101D6114</div>
<div class="d" style="left:66px;top:71px">40 E9 21 10</div>
<div class="d" style="left:150px;top:71px">70 EE 21 10</div>
<div class="d" style="left:234px;top:71px">A0 F3 21 10</div>
<div class="d" style="left:318px;top:71px">D0 F8 21 10</div>
<span class="a d" style="left:402px;top:71px;width:7px;text-align:center">@</span><span class="a d" style="left:409px;top:71px;width:7px;text-align:center">é</span><span class="a d" style="left:416px;top:71px;width:7px;text-align:center">!</span><span class="a d" style="left:423px;top:71px;width:7px;text-align:center">┼</span><span class="a d" style="left:430px;top:71px;width:7px;text-align:center">p</span><span class="a d" style="left:437px;top:71px;width:7px;text-align:center">î</span><span class="a d" style="left:444px;top:71px;width:7px;text-align:center">!</span><span class="a d" style="left:451px;top:71px;width:7px;text-align:center">┼</span><span class="a d" style="left:465px;top:71px;width:7px;text-align:center">ó</span><span class="a d" style="left:472px;top:71px;width:7px;text-align:center">!</span><span class="a d" style="left:479px;top:71px;width:7px;text-align:center">┼</span><span class="a d" style="left:486px;top:71px;width:7px;text-align:center">Ð</span><span class="a d" style="left:493px;top:71px;width:7px;text-align:center">ø</span><span class="a d" style="left:500px;top:71px;width:7px;text-align:center">!</span><span class="a d" style="left:507px;top:71px;width:7px;text-align:center">┼</span>
<div class="d" style="left:3px;top:85px">101D6124</div>
<div class="d" style="left:66px;top:85px">00 FE 21 10</div>
<div class="d" style="left:150px;top:85px">30 03 22 10</div>
<div class="d" style="left:234px;top:85px">60 08 22 10</div>
<div class="d" style="left:318px;top:85px">90 0D 22 10</div>
<span class="a d" style="left:402px;top:85px;width:7px;text-align:center">.</span><span class="a d" style="left:409px;top:85px;width:7px;text-align:center">þ</span><span class="a d" style="left:416px;top:85px;width:7px;text-align:center">!</span><span class="a d" style="left:423px;top:85px;width:7px;text-align:center">┼</span><span class="a d" style="left:430px;top:85px;width:7px;text-align:center">0</span><span class="a d" style="left:437px;top:85px;width:7px;text-align:center">└</span><span class="a d" style="left:444px;top:85px;width:7px;text-align:center">"</span><span class="a d" style="left:451px;top:85px;width:7px;text-align:center">┼</span><span class="a d" style="left:458px;top:85px;width:7px;text-align:center">`</span><i style="left:465px;top:86px;width:7px;height:12px;background:#0000d0"></i><span class="a" style="left:465px;top:85px;width:7px;text-align:center;color:#fff;font:9px/14px 'DejaVu Sans Mono',monospace">●</span><span class="a d" style="left:472px;top:85px;width:7px;text-align:center">"</span><span class="a d" style="left:479px;top:85px;width:7px;text-align:center">┼</span><span class="a d" style="left:486px;top:85px;width:7px;text-align:center">▯</span><span class="a d" style="left:493px;top:85px;width:7px;text-align:center">.</span><span class="a d" style="left:500px;top:85px;width:7px;text-align:center">"</span><span class="a d" style="left:507px;top:85px;width:7px;text-align:center">┼</span>
<div class="d" style="left:3px;top:99px">101D6134</div>
<div class="d" style="left:66px;top:99px">C0 12 22 10</div>
<div class="d" style="left:150px;top:99px">00 00 80 3F</div>
<div class="d" style="left:234px;top:99px">00 00 00 00</div>
<div class="d" style="left:318px;top:99px">00 00 00 00</div>
<span class="a d" style="left:402px;top:99px;width:7px;text-align:center">À</span><span class="a d" style="left:409px;top:99px;width:7px;text-align:center">↕</span><span class="a d" style="left:416px;top:99px;width:7px;text-align:center">"</span><span class="a d" style="left:423px;top:99px;width:7px;text-align:center">┼</span><span class="a d" style="left:430px;top:99px;width:7px;text-align:center">.</span><span class="a d" style="left:437px;top:99px;width:7px;text-align:center">.</span><span class="a d" style="left:444px;top:99px;width:7px;text-align:center">€</span><span class="a d" style="left:451px;top:99px;width:7px;text-align:center">?</span><span class="a d" style="left:458px;top:99px;width:7px;text-align:center">.</span><span class="a d" style="left:465px;top:99px;width:7px;text-align:center">.</span><span class="a d" style="left:472px;top:99px;width:7px;text-align:center">.</span><span class="a d" style="left:479px;top:99px;width:7px;text-align:center">.</span><span class="a d" style="left:486px;top:99px;width:7px;text-align:center">.</span><span class="a d" style="left:493px;top:99px;width:7px;text-align:center">.</span><span class="a d" style="left:500px;top:99px;width:7px;text-align:center">.</span><span class="a d" style="left:507px;top:99px;width:7px;text-align:center">.</span>
<div class="d" style="left:3px;top:113px">101D6144</div>
<div class="d" style="left:66px;top:113px">00 00 00 00</div>
<div class="d" style="left:150px;top:113px">00 00 00 00</div>
<div class="d" style="left:234px;top:113px">00 00 80 3F</div>
<div class="d" style="left:318px;top:113px">00 00 00 00</div>
<span class="a d" style="left:402px;top:113px;width:7px;text-align:center">.</span><span class="a d" style="left:409px;top:113px;width:7px;text-align:center">.</span><span class="a d" style="left:416px;top:113px;width:7px;text-align:center">.</span><span class="a d" style="left:423px;top:113px;width:7px;text-align:center">.</span><span class="a d" style="left:430px;top:113px;width:7px;text-align:center">.</span><span class="a d" style="left:437px;top:113px;width:7px;text-align:center">.</span><span class="a d" style="left:444px;top:113px;width:7px;text-align:center">.</span><span class="a d" style="left:451px;top:113px;width:7px;text-align:center">.</span><span class="a d" style="left:458px;top:113px;width:7px;text-align:center">.</span><span class="a d" style="left:465px;top:113px;width:7px;text-align:center">.</span><span class="a d" style="left:472px;top:113px;width:7px;text-align:center">€</span><span class="a d" style="left:479px;top:113px;width:7px;text-align:center">?</span><span class="a d" style="left:486px;top:113px;width:7px;text-align:center">.</span><span class="a d" style="left:493px;top:113px;width:7px;text-align:center">.</span><span class="a d" style="left:500px;top:113px;width:7px;text-align:center">.</span><span class="a d" style="left:507px;top:113px;width:7px;text-align:center">.</span>
<div class="d" style="left:3px;top:127px">101D6154</div>
<div class="d" style="left:66px;top:127px">00 00 00 00</div>
<div class="d" style="left:150px;top:127px">00 00 00 00</div>
<div class="d" style="left:234px;top:127px">00 00 00 00</div>
<div class="d" style="left:318px;top:127px">00 00 80 3F</div>
<span class="a d" style="left:402px;top:127px;width:7px;text-align:center">.</span><span class="a d" style="left:409px;top:127px;width:7px;text-align:center">.</span><span class="a d" style="left:416px;top:127px;width:7px;text-align:center">.</span><span class="a d" style="left:423px;top:127px;width:7px;text-align:center">.</span><span class="a d" style="left:430px;top:127px;width:7px;text-align:center">.</span><span class="a d" style="left:437px;top:127px;width:7px;text-align:center">.</span><span class="a d" style="left:444px;top:127px;width:7px;text-align:center">.</span><span class="a d" style="left:451px;top:127px;width:7px;text-align:center">.</span><span class="a d" style="left:458px;top:127px;width:7px;text-align:center">.</span><span class="a d" style="left:465px;top:127px;width:7px;text-align:center">.</span><span class="a d" style="left:472px;top:127px;width:7px;text-align:center">.</span><span class="a d" style="left:479px;top:127px;width:7px;text-align:center">.</span><span class="a d" style="left:486px;top:127px;width:7px;text-align:center">.</span><span class="a d" style="left:493px;top:127px;width:7px;text-align:center">.</span><span class="a d" style="left:500px;top:127px;width:7px;text-align:center">€</span><span class="a d" style="left:507px;top:127px;width:7px;text-align:center">?</span>
<div class="d" style="left:3px;top:141px">101D6164</div>
<div class="d" style="left:66px;top:141px">00 00 00 00</div>
<div class="d" style="left:150px;top:141px">00 00 00 00</div>
<div class="d" style="left:234px;top:141px">00 00 00 00</div>
<div class="d" style="left:318px;top:141px">00 00 00 00</div>
<span class="a d" style="left:402px;top:141px;width:7px;text-align:center">.</span><span class="a d" style="left:409px;top:141px;width:7px;text-align:center">.</span><span class="a d" style="left:416px;top:141px;width:7px;text-align:center">.</span><span class="a d" style="left:423px;top:141px;width:7px;text-align:center">.</span><span class="a d" style="left:430px;top:141px;width:7px;text-align:center">.</span><span class="a d" style="left:437px;top:141px;width:7px;text-align:center">.</span><span class="a d" style="left:444px;top:141px;width:7px;text-align:center">.</span><span class="a d" style="left:451px;top:141px;width:7px;text-align:center">.</span><span class="a d" style="left:458px;top:141px;width:7px;text-align:center">.</span><span class="a d" style="left:465px;top:141px;width:7px;text-align:center">.</span><span class="a d" style="left:472px;top:141px;width:7px;text-align:center">.</span><span class="a d" style="left:479px;top:141px;width:7px;text-align:center">.</span><span class="a d" style="left:486px;top:141px;width:7px;text-align:center">.</span><span class="a d" style="left:493px;top:141px;width:7px;text-align:center">.</span><span class="a d" style="left:500px;top:141px;width:7px;text-align:center">.</span><span class="a d" style="left:507px;top:141px;width:7px;text-align:center">.</span>
<div class="d" style="left:3px;top:155px">101D6174</div>
<div class="d" style="left:66px;top:155px">00 00 80 3F</div>
<div class="d" style="left:150px;top:155px">B0 19 22 10</div>
<div class="d" style="left:234px;top:155px">E0 1E 22 10</div>
<div class="d" style="left:318px;top:155px">10 24 22 10</div>
<span class="a d" style="left:402px;top:155px;width:7px;text-align:center">.</span><span class="a d" style="left:409px;top:155px;width:7px;text-align:center">.</span><span class="a d" style="left:416px;top:155px;width:7px;text-align:center">€</span><span class="a d" style="left:423px;top:155px;width:7px;text-align:center">?</span><span class="a d" style="left:430px;top:155px;width:7px;text-align:center">°</span><span class="a d" style="left:437px;top:155px;width:7px;text-align:center">├</span><span class="a d" style="left:444px;top:155px;width:7px;text-align:center">"</span><span class="a d" style="left:451px;top:155px;width:7px;text-align:center">┼</span><span class="a d" style="left:458px;top:155px;width:7px;text-align:center">à</span><span class="a d" style="left:465px;top:155px;width:7px;text-align:center">"</span><span class="a d" style="left:472px;top:155px;width:7px;text-align:center">┼</span><span class="a d" style="left:479px;top:155px;width:7px;text-align:center">┼</span><span class="a d" style="left:486px;top:155px;width:7px;text-align:center">$</span><span class="a d" style="left:493px;top:155px;width:7px;text-align:center">"</span><span class="a d" style="left:500px;top:155px;width:7px;text-align:center">┼</span>
<div class="d" style="left:3px;top:169px">101D6184</div>
<div class="d" style="left:66px;top:169px">40 29 22 10</div>
<div class="d" style="left:150px;top:169px">70 2E 22 10</div>
<div class="d" style="left:234px;top:169px">A0 33 22 10</div>
<div class="d" style="left:318px;top:169px">D0 38 22 10</div>
<span class="a d" style="left:402px;top:169px;width:7px;text-align:center">@</span><span class="a d" style="left:409px;top:169px;width:7px;text-align:center">)</span><span class="a d" style="left:416px;top:169px;width:7px;text-align:center">"</span><span class="a d" style="left:423px;top:169px;width:7px;text-align:center">┼</span><span class="a d" style="left:430px;top:169px;width:7px;text-align:center">p</span><span class="a d" style="left:437px;top:169px;width:7px;text-align:center">.</span><span class="a d" style="left:444px;top:169px;width:7px;text-align:center">"</span><span class="a d" style="left:451px;top:169px;width:7px;text-align:center">┼</span><span class="a d" style="left:465px;top:169px;width:7px;text-align:center">3</span><span class="a d" style="left:472px;top:169px;width:7px;text-align:center">"</span><span class="a d" style="left:479px;top:169px;width:7px;text-align:center">┼</span><span class="a d" style="left:486px;top:169px;width:7px;text-align:center">Ð</span><span class="a d" style="left:493px;top:169px;width:7px;text-align:center">8</span><span class="a d" style="left:500px;top:169px;width:7px;text-align:center">"</span><span class="a d" style="left:507px;top:169px;width:7px;text-align:center">┼</span>
<div class="d" style="left:3px;top:183px">101D6194</div>
<div class="d" style="left:66px;top:183px">00 3E 22 10</div>
<div class="d" style="left:150px;top:183px">30 43 22 10</div>
<div class="d" style="left:234px;top:183px">60 48 22 10</div>
<div class="d" style="left:318px;top:183px">90 4D 22 10</div>
<span class="a d" style="left:402px;top:183px;width:7px;text-align:center">.</span><span class="a d" style="left:409px;top:183px;width:7px;text-align:center">&gt;</span><span class="a d" style="left:416px;top:183px;width:7px;text-align:center">"</span><span class="a d" style="left:423px;top:183px;width:7px;text-align:center">┼</span><span class="a d" style="left:430px;top:183px;width:7px;text-align:center">0</span><span class="a d" style="left:437px;top:183px;width:7px;text-align:center">C</span><span class="a d" style="left:444px;top:183px;width:7px;text-align:center">"</span><span class="a d" style="left:451px;top:183px;width:7px;text-align:center">┼</span><span class="a d" style="left:458px;top:183px;width:7px;text-align:center">`</span><span class="a d" style="left:465px;top:183px;width:7px;text-align:center">H</span><span class="a d" style="left:472px;top:183px;width:7px;text-align:center">"</span><span class="a d" style="left:479px;top:183px;width:7px;text-align:center">┼</span><span class="a d" style="left:486px;top:183px;width:7px;text-align:center">▯</span><span class="a d" style="left:493px;top:183px;width:7px;text-align:center">M</span><span class="a d" style="left:500px;top:183px;width:7px;text-align:center">"</span><span class="a d" style="left:507px;top:183px;width:7px;text-align:center">┼</span>
<div class="d" style="left:3px;top:197px">101D61A4</div>
<div class="d" style="left:66px;top:197px">C0 52 22 10</div>
<div class="d" style="left:150px;top:197px">F0 57 22 10</div>
<div class="d" style="left:234px;top:197px">20 5D 22 10</div>
<div class="d" style="left:318px;top:197px">50 62 22 10</div>
<span class="a d" style="left:402px;top:197px;width:7px;text-align:center">À</span><span class="a d" style="left:409px;top:197px;width:7px;text-align:center">R</span><span class="a d" style="left:416px;top:197px;width:7px;text-align:center">"</span><span class="a d" style="left:423px;top:197px;width:7px;text-align:center">┼</span><span class="a d" style="left:430px;top:197px;width:7px;text-align:center">ð</span><span class="a d" style="left:437px;top:197px;width:7px;text-align:center">W</span><span class="a d" style="left:444px;top:197px;width:7px;text-align:center">"</span><span class="a d" style="left:451px;top:197px;width:7px;text-align:center">┼</span><span class="a d" style="left:465px;top:197px;width:7px;text-align:center">]</span><span class="a d" style="left:472px;top:197px;width:7px;text-align:center">"</span><span class="a d" style="left:479px;top:197px;width:7px;text-align:center">┼</span><span class="a d" style="left:486px;top:197px;width:7px;text-align:center">P</span><span class="a d" style="left:493px;top:197px;width:7px;text-align:center">b</span><span class="a d" style="left:500px;top:197px;width:7px;text-align:center">"</span><span class="a d" style="left:507px;top:197px;width:7px;text-align:center">┼</span>
<div class="d" style="left:3px;top:211px">101D61B4</div>
<div class="d" style="left:66px;top:211px">80 67 22 10</div>
<div class="d" style="left:150px;top:211px">B0 6C 22 10</div>
<div class="d" style="left:234px;top:211px">E0 71 22 10</div>
<div class="d" style="left:318px;top:211px">10 77 22 10</div>
<span class="a d" style="left:402px;top:211px;width:7px;text-align:center">€</span><span class="a d" style="left:409px;top:211px;width:7px;text-align:center">g</span><span class="a d" style="left:416px;top:211px;width:7px;text-align:center">"</span><span class="a d" style="left:423px;top:211px;width:7px;text-align:center">┼</span><span class="a d" style="left:430px;top:211px;width:7px;text-align:center">°</span><span class="a d" style="left:437px;top:211px;width:7px;text-align:center">l</span><span class="a d" style="left:444px;top:211px;width:7px;text-align:center">"</span><span class="a d" style="left:451px;top:211px;width:7px;text-align:center">┼</span><span class="a d" style="left:458px;top:211px;width:7px;text-align:center">à</span><span class="a d" style="left:465px;top:211px;width:7px;text-align:center">q</span><span class="a d" style="left:472px;top:211px;width:7px;text-align:center">"</span><span class="a d" style="left:479px;top:211px;width:7px;text-align:center">┼</span><span class="a d" style="left:486px;top:211px;width:7px;text-align:center">┼</span><span class="a d" style="left:493px;top:211px;width:7px;text-align:center">w</span><span class="a d" style="left:500px;top:211px;width:7px;text-align:center">"</span><span class="a d" style="left:507px;top:211px;width:7px;text-align:center">┼</span>
<div class="d" style="left:3px;top:225px">101D61C4</div>
<div class="d" style="left:66px;top:225px">40 7C 22 10</div>
<div class="d" style="left:150px;top:225px">70 81 22 10</div>
<div class="d" style="left:234px;top:225px">A0 86 22 10</div>
<div class="d" style="left:318px;top:225px">D0 8B 22 10</div>
<span class="a d" style="left:402px;top:225px;width:7px;text-align:center">@</span><span class="a d" style="left:409px;top:225px;width:7px;text-align:center">|</span><span class="a d" style="left:416px;top:225px;width:7px;text-align:center">"</span><span class="a d" style="left:423px;top:225px;width:7px;text-align:center">┼</span><span class="a d" style="left:430px;top:225px;width:7px;text-align:center">p</span><span class="a d" style="left:437px;top:225px;width:7px;text-align:center">▯</span><span class="a d" style="left:444px;top:225px;width:7px;text-align:center">"</span><span class="a d" style="left:451px;top:225px;width:7px;text-align:center">┼</span><span class="a d" style="left:465px;top:225px;width:7px;text-align:center">†</span><span class="a d" style="left:472px;top:225px;width:7px;text-align:center">"</span><span class="a d" style="left:479px;top:225px;width:7px;text-align:center">┼</span><span class="a d" style="left:486px;top:225px;width:7px;text-align:center">Ð</span><span class="a d" style="left:493px;top:225px;width:7px;text-align:center">‹</span><span class="a d" style="left:500px;top:225px;width:7px;text-align:center">"</span><span class="a d" style="left:507px;top:225px;width:7px;text-align:center">┼</span>
<div class="d" style="left:3px;top:239px">101D61D4</div>
<div class="d" style="left:66px;top:239px">00 91 22 10</div>
<div class="d" style="left:150px;top:239px">30 96 22 10</div>
<div class="d" style="left:234px;top:239px">60 9B 22 10</div>
<div class="d" style="left:318px;top:239px">90 A0 22 10</div>
<span class="a d" style="left:402px;top:239px;width:7px;text-align:center">.</span><span class="a d" style="left:409px;top:239px;width:7px;text-align:center">‘</span><span class="a d" style="left:416px;top:239px;width:7px;text-align:center">"</span><span class="a d" style="left:423px;top:239px;width:7px;text-align:center">┼</span><span class="a d" style="left:430px;top:239px;width:7px;text-align:center">0</span><span class="a d" style="left:437px;top:239px;width:7px;text-align:center">–</span><span class="a d" style="left:444px;top:239px;width:7px;text-align:center">"</span><span class="a d" style="left:451px;top:239px;width:7px;text-align:center">┼</span><span class="a d" style="left:458px;top:239px;width:7px;text-align:center">`</span><span class="a d" style="left:465px;top:239px;width:7px;text-align:center">›</span><span class="a d" style="left:472px;top:239px;width:7px;text-align:center">"</span><span class="a d" style="left:479px;top:239px;width:7px;text-align:center">┼</span><span class="a d" style="left:486px;top:239px;width:7px;text-align:center">▯</span><span class="a d" style="left:500px;top:239px;width:7px;text-align:center">"</span><span class="a d" style="left:507px;top:239px;width:7px;text-align:center">┼</span>
<div class="d" style="left:3px;top:253px">101D61E4</div>
<div class="d" style="left:66px;top:253px">C0 A5 22 10</div>
<div class="d" style="left:150px;top:253px">44 08 18 10</div>
<div class="d" style="left:234px;top:253px">00 00 00 00</div>
<div class="d" style="left:318px;top:253px">2E 3F 41 56</div>
<span class="a d" style="left:402px;top:253px;width:7px;text-align:center">À</span><span class="a d" style="left:409px;top:253px;width:7px;text-align:center">¥</span><span class="a d" style="left:416px;top:253px;width:7px;text-align:center">"</span><span class="a d" style="left:423px;top:253px;width:7px;text-align:center">┼</span><span class="a d" style="left:430px;top:253px;width:7px;text-align:center">D</span><i style="left:437px;top:254px;width:7px;height:12px;background:#0000d0"></i><span class="a" style="left:437px;top:253px;width:7px;text-align:center;color:#fff;font:9px/14px 'DejaVu Sans Mono',monospace">●</span><span class="a d" style="left:444px;top:253px;width:7px;text-align:center">↑</span><span class="a d" style="left:451px;top:253px;width:7px;text-align:center">┼</span><span class="a d" style="left:458px;top:253px;width:7px;text-align:center">.</span><span class="a d" style="left:465px;top:253px;width:7px;text-align:center">.</span><span class="a d" style="left:472px;top:253px;width:7px;text-align:center">.</span><span class="a d" style="left:479px;top:253px;width:7px;text-align:center">.</span><span class="a d" style="left:486px;top:253px;width:7px;text-align:center">.</span><span class="a d" style="left:493px;top:253px;width:7px;text-align:center">?</span><span class="a d" style="left:500px;top:253px;width:7px;text-align:center">A</span><span class="a d" style="left:507px;top:253px;width:7px;text-align:center">V</span>
<div class="d" style="left:3px;top:267px">101D61F4</div>
<div class="d" style="left:66px;top:267px">3F 24 4C 32</div>
<div class="d" style="left:150px;top:267px">54 68 72 65</div>
<div class="d" style="left:234px;top:267px">61 64 40 50</div>
<div class="d" style="left:318px;top:267px">41 56 55 4F</div>
<span class="a d" style="left:402px;top:267px;width:7px;text-align:center">?</span><span class="a d" style="left:409px;top:267px;width:7px;text-align:center">$</span><span class="a d" style="left:416px;top:267px;width:7px;text-align:center">L</span><span class="a d" style="left:423px;top:267px;width:7px;text-align:center">2</span><span class="a d" style="left:430px;top:267px;width:7px;text-align:center">T</span><span class="a d" style="left:437px;top:267px;width:7px;text-align:center">h</span><span class="a d" style="left:444px;top:267px;width:7px;text-align:center">r</span><span class="a d" style="left:451px;top:267px;width:7px;text-align:center">e</span><span class="a d" style="left:458px;top:267px;width:7px;text-align:center">a</span><span class="a d" style="left:465px;top:267px;width:7px;text-align:center">d</span><span class="a d" style="left:472px;top:267px;width:7px;text-align:center">@</span><span class="a d" style="left:479px;top:267px;width:7px;text-align:center">P</span><span class="a d" style="left:486px;top:267px;width:7px;text-align:center">A</span><span class="a d" style="left:493px;top:267px;width:7px;text-align:center">V</span><span class="a d" style="left:500px;top:267px;width:7px;text-align:center">U</span><span class="a d" style="left:507px;top:267px;width:7px;text-align:center">O</span>
<div class="vl" style="left:62px;top:0px;width:1px;height:281px;"></div>
<div class="vl" style="left:146px;top:0px;width:1px;height:281px;"></div>
<div class="vl" style="left:230px;top:0px;width:1px;height:281px;"></div>
<div class="vl" style="left:314px;top:0px;width:1px;height:281px;"></div>
<div class="vl" style="left:398px;top:0px;width:1px;height:281px;"></div>
<div class="vl" style="left:517px;top:0px;width:1px;height:281px;"></div>
</div>
<div class="sb" style="left:662px;top:658px;height:281px"><div class="sbb" style="top:0"><svg width="15" height="15" viewBox="0 0 16 16"><path d="M3.6 10.8 L8.2 6.2 L12.8 10.8" fill="none" stroke="#4d6185" stroke-width="2.5"/></svg></div><div class="sbb" style="top:19px;height:17px"><svg style="top:0px" width="15" height="15" viewBox="0 0 16 16"><rect x="5" y="4.5" width="6" height="1" fill="#8d98b8"/><rect x="5" y="6.5" width="6" height="1" fill="#8d98b8"/><rect x="5" y="8.5" width="6" height="1" fill="#8d98b8"/><rect x="5" y="10.5" width="6" height="1" fill="#8d98b8"/></svg></div><div class="sbb" style="top:264px"><svg width="15" height="15" viewBox="0 0 16 16"><path d="M3.6 5.6 L8.2 10.2 L12.8 5.6" fill="none" stroke="#4d6185" stroke-width="2.5"/></svg></div></div>
<div class="pane" style="left:681px;top:658px;width:560px;height:281px">
<div style="left:0px;top:0px;width:53px;height:9px;background:#000"></div>
<div style="left:54px;top:0px;width:506px;height:9px;background:#c0c0c0"></div>
<div class="t" style="left:3px;top:0px;color:#fff;">0012FFC4</div>
<div class="t" style="left:63px;top:0px;color:#0000c0;">7D4E7D2A</div>
<div class="t" style="left:117px;top:0px;color:#0000c0;">RETURN to kernel32.7D4E7D2A</div>
<div class="t" style="left:3px;top:9px;color:#0000c0;">0012FFC8</div>
<div class="t" style="left:63px;top:9px;color:#0000c0;">00000000</div>
<div class="t" style="left:3px;top:18px;color:#0000c0;">0012FFCC</div>
<div class="t" style="left:63px;top:18px;color:#0000c0;">00000000</div>
<div class="t" style="left:3px;top:27px;color:#0000c0;">0012FFD0</div>
<div class="t" style="left:63px;top:27px;color:#0000c0;">7EFDE000</div>
<div class="t" style="left:3px;top:36px;color:#0000c0;">0012FFD4</div>
<div class="t" style="left:63px;top:36px;color:#0000c0;">00000000</div>
<div class="t" style="left:3px;top:45px;color:#0000c0;">0012FFD8</div>
<div class="t" style="left:63px;top:45px;color:#0000c0;">0012FFC8</div>
<div class="t" style="left:3px;top:54px;color:#0000c0;">0012FFDC</div>
<div class="t" style="left:63px;top:54px;color:#0000c0;">00000000</div>
<div class="t" style="left:3px;top:63px;color:#0000c0;">0012FFE0</div>
<div class="t" style="left:63px;top:63px;color:#0000c0;">FFFFFFFF</div>
<div class="t" style="left:117px;top:63px;color:#0000c0;">End of SEH chain</div>
<div class="t" style="left:3px;top:72px;color:#0000c0;">0012FFE4</div>
<div class="t" style="left:63px;top:72px;color:#0000c0;">7D4D89C4</div>
<div class="t" style="left:117px;top:72px;color:#0000c0;">SE handler</div>
<div class="t" style="left:3px;top:81px;color:#0000c0;">0012FFE8</div>
<div class="t" style="left:63px;top:81px;color:#0000c0;">7D4E7D38</div>
<div class="t" style="left:117px;top:81px;color:#0000c0;">kernel32.7D4E7D38</div>
<div class="t" style="left:3px;top:90px;color:#0000c0;">0012FFEC</div>
<div class="t" style="left:63px;top:90px;color:#0000c0;">00000000</div>
<div class="t" style="left:3px;top:99px;color:#0000c0;">0012FFF0</div>
<div class="t" style="left:63px;top:99px;color:#0000c0;">00000000</div>
<div class="t" style="left:3px;top:108px;color:#0000c0;">0012FFF4</div>
<div class="t" style="left:63px;top:108px;color:#0000c0;">00000000</div>
<div class="t" style="left:3px;top:117px;color:#0000c0;">0012FFF8</div>
<div class="t" style="left:63px;top:117px;color:#0000c0;">109178A6</div>
<div class="t" style="left:117px;top:117px;color:#0000c0;">l2.&lt;ModuleEntryPoint&gt;</div>
<div class="t" style="left:3px;top:126px;color:#0000c0;">0012FFFC</div>
<div class="t" style="left:63px;top:126px;color:#0000c0;">00000000</div>
<div class="vl" style="left:53px;top:0px;width:1px;height:281px;"></div>
<div class="vl" style="left:113px;top:0px;width:1px;height:281px;"></div>
</div>
<div class="sb" style="left:1241px;top:658px;height:281px"><div class="sbb" style="top:0"><svg width="15" height="15" viewBox="0 0 16 16"><path d="M3.6 10.8 L8.2 6.2 L12.8 10.8" fill="none" stroke="#4d6185" stroke-width="2.5"/></svg></div><div class="sbb" style="top:246px;height:17px"><svg style="top:0px" width="15" height="15" viewBox="0 0 16 16"><rect x="5" y="4.5" width="6" height="1" fill="#8d98b8"/><rect x="5" y="6.5" width="6" height="1" fill="#8d98b8"/><rect x="5" y="8.5" width="6" height="1" fill="#8d98b8"/><rect x="5" y="10.5" width="6" height="1" fill="#8d98b8"/></svg></div><div class="sbb" style="top:264px"><svg width="15" height="15" viewBox="0 0 16 16"><path d="M3.6 5.6 L8.2 10.2 L12.8 5.6" fill="none" stroke="#4d6185" stroke-width="2.5"/></svg></div></div>
<div style="left:94px;top:260px;width:574px;height:174px;background:#76aaec;border-radius:8px 8px 0 0"></div>
<div style="left:96px;top:289px;width:570px;height:142px;background:#214fa6"></div>
<div style="left:94px;top:260px;width:574px;height:30px;background:linear-gradient(180deg,#1a4a8c 0,#1a4a8c 1px,#96c4fa 1px,#88bcf2 3px,#7cbae8 4px,#70b2e4 6px,#68a4e6 9px,#66a0ea 11px,#5a98e6 15px,#3a7ccc 15px,#3a7cce 18px,#3870d0 20px,#326cc4 22px,#345cb4 25px,#2c54b0 29px,#1e3a8a 29px,#1e3a8a 30px);border-radius:8px 8px 0 0"></div>
<div class="ic" style="left:99px;top:268px">D</div>
<div class="ttl" style="left:119px;top:270px;letter-spacing:.12px">File C:\Program Files (x86)\Lin2PTS\system9\engine.dll</div>
<div class="cb" style="left:596px;top:266px"><svg width="18" height="18" viewBox="0 0 18 18" style="position:absolute;left:0;top:0"><rect x="3" y="12" width="7" height="3" fill="#fff"/></svg></div>
<div class="cb" style="left:619px;top:266px"><svg width="18" height="18" viewBox="0 0 18 18" style="position:absolute;left:0;top:0"><rect x="3.5" y="4.5" width="10" height="10" fill="none" stroke="#fff" stroke-width="1"/><rect x="3" y="4" width="11" height="3" fill="#fff"/></svg></div>
<div class="cb x" style="left:642px;top:266px"><svg width="18" height="18" viewBox="0 0 18 18" style="position:absolute;left:0;top:0"><path d="M4.5 5 L13.5 14 M13.5 5 L4.5 14" stroke="#fff" stroke-width="2.3" stroke-linecap="butt"/></svg></div>
<div class="pane" style="left:97px;top:290px;width:550px;height:140px">
<div style="left:0px;top:0px;width:550px;height:9px;background:#c0c0c0"></div>
<div class="t" style="left:3px;top:0px;color:#000;">00371260</div>
<div class="t" style="left:57px;top:0px;width:97px;overflow:hidden">  8EAF FAF616F2</div>
<div class="t" style="left:159px;top:0px;width:236px;overflow:hidden">MOV GS, WORD PTR DS:[EDI+F216F6FA]</div>
<div class="t" style="left:3px;top:9px;color:#0000c0;">00371266</div>
<div class="t" style="left:57px;top:9px;width:97px;overflow:hidden">  BE 2AE2ECBE</div>
<div class="t" style="left:159px;top:9px;width:236px;overflow:hidden">MOV ESI, BEECE22A</div>
<div class="t" style="left:3px;top:18px;color:#0000c0;">0037126B</div>
<div class="t" style="left:57px;top:18px;width:97px;overflow:hidden">  2AE2</div>
<div class="t" style="left:159px;top:18px;width:236px;overflow:hidden">SUB AH, DL</div>
<div class="t" style="left:3px;top:27px;color:#0000c0;">0037126D</div>
<div class="t" style="left:57px;top:27px;width:97px;overflow:hidden">  EC</div>
<div class="t" style="left:159px;top:27px;width:236px;overflow:hidden">IN AL, DX</div>
<div class="t" style="left:3px;top:36px;color:#0000c0;">0037126E</div>
<div class="t" style="left:57px;top:36px;width:97px;overflow:hidden">  BE 2A676683</div>
<div class="t" style="left:159px;top:36px;width:236px;overflow:hidden">MOV ESI, 8366672A</div>
<div class="t" style="left:3px;top:45px;color:#0000c0;">00371273</div>
<div class="t" style="left:57px;top:45px;width:97px;overflow:hidden">  1D 07DA31BC</div>
<div class="t" style="left:159px;top:45px;width:236px;overflow:hidden">SBB EAX, BC31DA07</div>
<div class="t" style="left:3px;top:54px;color:#0000c0;">00371278</div>
<div class="t" style="left:57px;top:54px;width:97px;overflow:hidden">  56</div>
<div class="t" style="left:159px;top:54px;width:236px;overflow:hidden">PUSH ESI</div>
<div class="t" style="left:3px;top:63px;color:#0000c0;">00371279</div>
<div class="t" style="left:57px;top:63px;width:97px;overflow:hidden">  F6F5</div>
<div class="t" style="left:159px;top:63px;width:236px;overflow:hidden">DIV CH</div>
<div class="t" style="left:3px;top:72px;color:#0000c0;">0037127B</div>
<div class="t" style="left:57px;top:72px;width:97px;overflow:hidden">  E6 31</div>
<div class="t" style="left:159px;top:72px;width:236px;overflow:hidden">OUT 31, AL</div>
<div class="t" style="left:3px;top:81px;color:#0000c0;">0037127D</div>
<div class="t" style="left:57px;top:81px;width:97px;overflow:hidden">  26:0BF7</div>
<div class="t" style="left:159px;top:81px;width:236px;overflow:hidden">OR ESI, EDI</div>
<div class="t" style="left:3px;top:90px;color:#0000c0;">00371280</div>
<div class="t" style="left:57px;top:90px;width:97px;overflow:hidden">  16</div>
<div class="t" style="left:159px;top:90px;width:236px;overflow:hidden">PUSH SS</div>
<div class="t" style="left:3px;top:99px;color:#0000c0;">00371281</div>
<div class="t" style="left:57px;top:99px;width:97px;overflow:hidden">  B1 FA</div>
<div class="t" style="left:159px;top:99px;width:236px;overflow:hidden">MOV CL, 0FA</div>
<div class="t" style="left:3px;top:108px;color:#0000c0;">00371283</div>
<div class="t" style="left:57px;top:108px;width:97px;overflow:hidden">  9C</div>
<div class="t" style="left:159px;top:108px;width:236px;overflow:hidden">PUSHFD</div>
<div class="t" style="left:3px;top:117px;color:#0000c0;">00371284</div>
<div class="t" style="left:57px;top:117px;width:97px;overflow:hidden">  0F6783 B3122A27</div>
<div class="t" style="left:159px;top:117px;width:236px;overflow:hidden">PACKUSWB MM0, QWORD PTR DS:[EBX+272A12B3]</div>
<div class="t" style="left:3px;top:126px;color:#0000c0;">0037128B</div>
<div class="t" style="left:57px;top:126px;width:97px;overflow:hidden">^ 7F 99</div>
<div class="t" style="left:159px;top:126px;width:236px;overflow:hidden">JG SHORT 00371226</div>
<div class="t" style="left:3px;top:135px;color:#0000c0;">0037128D</div>
<div class="t" style="left:57px;top:135px;width:97px;overflow:hidden">  C6</div>
<div class="t" style="left:159px;top:135px;width:236px;overflow:hidden">???</div>
<div class="vl" style="left:53px;top:0px;width:1px;height:140px;"></div>
<div class="vl" style="left:155px;top:0px;width:1px;height:140px;"></div>
<div class="vl" style="left:395px;top:0px;width:1px;height:140px;"></div>
</div>
<div class="sb" style="left:647px;top:290px;height:140px"><div class="sbb" style="top:0"><svg width="15" height="15" viewBox="0 0 16 16"><path d="M3.6 10.8 L8.2 6.2 L12.8 10.8" fill="none" stroke="#4d6185" stroke-width="2.5"/></svg></div><div class="sbb" style="top:30px;height:17px"><svg style="top:0px" width="15" height="15" viewBox="0 0 16 16"><rect x="5" y="4.5" width="6" height="1" fill="#8d98b8"/><rect x="5" y="6.5" width="6" height="1" fill="#8d98b8"/><rect x="5" y="8.5" width="6" height="1" fill="#8d98b8"/><rect x="5" y="10.5" width="6" height="1" fill="#8d98b8"/></svg></div><div class="sbb" style="top:123px"><svg width="15" height="15" viewBox="0 0 16 16"><path d="M3.6 5.6 L8.2 10.2 L12.8 5.6" fill="none" stroke="#4d6185" stroke-width="2.5"/></svg></div></div>
<div class="clip" style="left:4px;top:654px;width:70px;height:290px">
<div style="left:0px;top:0px;width:300px;height:290px;background:#8abcf4;border-radius:7px 7px 0 0"></div>
<div style="left:0px;top:0px;width:300px;height:31px;background:linear-gradient(180deg,#5a7098 0,#5a7098 1px,#86b4f2 1px,#7eaef0 2.5px,#4a74b8 3px,#5078c0 6px,#5888c8 10px,#5c90cc 16.5px,#70a4dc 17px,#78ace0 20px,#84b4e4 24px,#8ec0ec 31px);border-radius:7px 7px 0 0"></div>
<div class="ic" style="left:6px;top:8px">B</div>
<div class="ttl" style="left:26px;top:10px;text-shadow:none;letter-spacing:.12px">Breakpoints</div>
<div class="pane" style="left:4px;top:30px;width:296px;height:257px">
<div class="hdr" style="left:0px;top:0px;width:296px;height:12px;"></div>
<div style="left:0px;top:12px;width:296px;height:1px;background:#202020"></div>
<div class="t" style="left:3px;top:2px;">Address</div>
<div class="t" style="left:57px;top:2px;">Module</div>
<div style="left:0px;top:22px;width:296px;height:9px;background:#c8c4c0"></div>
<div class="t" style="left:3px;top:13px;">004A04DC</div>
<div class="t" style="left:57px;top:13px;">AD</div>
<div class="t" style="left:3px;top:22px;">008F11F2</div>
<div class="t" style="left:57px;top:22px;">en</div>
<div class="t" style="left:3px;top:31px;">01DE1000</div>
<div class="t" style="left:57px;top:31px;">ec</div>
<div class="t" style="left:3px;top:40px;">7D4D0F40</div>
<div class="t" style="left:57px;top:40px;">ke</div>
<div class="t" style="left:3px;top:49px;">7D4D1004</div>
<div class="t" style="left:57px;top:49px;">ke</div>
<div class="t" style="left:3px;top:58px;">7D4D1357</div>
<div class="t" style="left:57px;top:58px;">ke</div>
<div class="t" style="left:3px;top:67px;">7D4D8DF9</div>
<div class="t" style="left:57px;top:67px;">ke</div>
<div class="t" style="left:3px;top:76px;">7D4D8E8F</div>
<div class="t" style="left:57px;top:76px;">ke</div>
<div class="t" style="left:3px;top:85px;">7D4D8ED2</div>
<div class="t" style="left:57px;top:85px;">ke</div>
<div class="t" style="left:3px;top:94px;">7D4E1D04</div>
<div class="t" style="left:57px;top:94px;">ke</div>
<div class="t" style="left:3px;top:103px;">7D4E26F9</div>
<div class="t" style="left:57px;top:103px;">ke</div>
<div class="t" style="left:3px;top:112px;">7D503F46</div>
<div class="t" style="left:57px;top:112px;">ke</div>
<div class="t" style="left:3px;top:121px;">7D61CA0B</div>
<div class="t" style="left:57px;top:121px;">nt</div>
<div class="t" style="left:3px;top:130px;">7D61CBD3</div>
<div class="t" style="left:57px;top:130px;">nt</div>
<div class="t" style="left:3px;top:139px;">7D61CDFB</div>
<div class="t" style="left:57px;top:139px;">nt</div>
<div class="t" style="left:3px;top:148px;">7D61DD2C</div>
<div class="t" style="left:57px;top:148px;">nt</div>
<div class="t" style="left:3px;top:157px;">7D61EA28</div>
<div class="t" style="left:57px;top:157px;">nt</div>
<div class="t" style="left:3px;top:166px;">7D61EC02</div>
<div class="t" style="left:57px;top:166px;">nt</div>
<div class="t" style="left:3px;top:175px;">7D623BB5</div>
<div class="t" style="left:57px;top:175px;">nt</div>
<div class="vl" style="left:53px;top:0px;width:1px;height:257px;"></div>
</div></div>
<div style="left:4px;top:944px;width:1260px;height:26px;background:#efedf3;border-top:1px solid #fbfbfd;border-left:1px solid #fff"></div>
<div style="left:9px;top:950px;font:11px/14px 'Liberation Sans',sans-serif;white-space:pre">Command :</div>
<div style="left:66px;top:948px;width:200px;height:20px;background:#fff;border:1px solid #b8b4bc"></div>
<div style="left:248px;top:950px;width:16px;height:16px;border:1px solid #c9cfe2;border-radius:2px;background:linear-gradient(135deg,#fff,#d7dcef)"><svg width="14" height="14" viewBox="0 0 14 14" style="position:absolute;left:0;top:0"><path d="M3.5 5 L7 8.5 L10.5 5" fill="none" stroke="#4d6185" stroke-width="2"/></svg></div>
<div style="left:269px;top:948px;width:992px;height:20px;background:#efedf3;border:1px solid #b8b4bc;border-right-color:#fff;border-bottom-color:#fff"></div>
<div style="left:4px;top:970px;width:1260px;height:20px;background:#c4c4c4;border-top:1px solid #fff;border-left:1px solid #fff;border-bottom:2px solid #fff"></div>
<div style="left:4px;top:971px;width:1260px;height:1px;background:#dcdcdc"></div>
<div style="left:5px;top:972px;width:1162px;height:17px;border:1px solid;border-color:#8c8c8c #fff #c4c4c4 #8c8c8c;background:#c4c4c4"></div>
<div style="left:1168px;top:972px;width:29px;height:17px;border:1px solid;border-color:#8c8c8c #fff #c4c4c4 #8c8c8c;background:#c4c4c4"></div>
<div style="left:1198px;top:972px;width:65px;height:17px;border:1px solid;border-color:#8c8c8c #fff #c4c4c4 #8c8c8c;background:#ffff00;border-bottom-color:#ffff00"></div>
<div style="left:9px;top:974px;font:11px/13px 'Liberation Sans',sans-serif;white-space:pre;transform-origin:0 0;transform:scaleX(0.986)">Module C:\WINDOWS\WinSxS\WOW64_Microsoft.Windows.Common-Controls_6595b64144ccf1df_6.0.3790.3959_x-ww_5FA17F4E\comctl32.dll</div>
<div style="left:1202px;top:974px;font:11px/13px 'Liberation Sans',sans-serif;color:#e00000;white-space:pre">Paused</div>
</body></html>
